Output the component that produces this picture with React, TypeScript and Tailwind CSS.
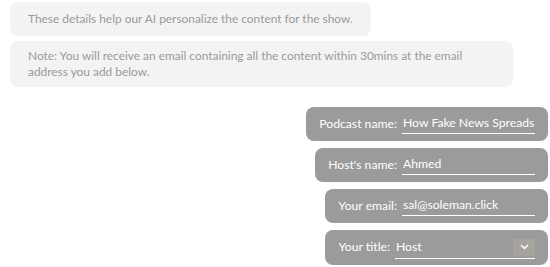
import React from "react";

const font = { fontFamily: '"Lato", "Open Sans", sans-serif' };

function Row({ label, value }: { label: string; value: string }) {
  return (
    <div className="flex h-[34px] items-center whitespace-nowrap rounded-[8px] bg-[#9b9b9b] pl-[13px] pr-[13px]">
      <span className="text-[12.2px] text-white">{label}</span>
      <div className="ml-[5px] flex h-[20px] w-[133px] items-center border-b border-white pl-[1px] text-[12.2px] text-white">
        {value}
      </div>
    </div>
  );
}

export default function App() {
  return (
    <div className="flex w-[550px] flex-col bg-white pt-[2px]" style={font}>
      <div className="flex flex-col items-start gap-[5px] pl-[10px]">
        <div className="rounded-[8px] bg-[#f3f3f3] px-[18px] py-[9px] text-[11.9px] leading-[16px] text-[#9a9a9a]">
          These details help our AI personalize the content for the show.
        </div>
        <div className="w-[503px] rounded-[8px] bg-[#f3f3f3] px-[18px] py-[7px] text-[11.9px] leading-[16px] text-[#9a9a9a]">
          Note: You will receive an email containing all the content within 30mins at the email address you add below.
        </div>
      </div>
      <div className="mt-[20px] flex flex-col items-end gap-[7px] pr-[2px]">
        <Row label="Podcast name:" value="How Fake News Spreads" />
        <Row label="Host's name:" value="Ahmed" />
        <Row label="Your email:" value="sal@soleman.click" />
        <div className="flex h-[35px] items-center whitespace-nowrap rounded-[8px] bg-[#9b9b9b] pl-[13px] pr-[13px]">
          <span className="text-[12.2px] text-white">Your title:</span>
          <div className="ml-[5px] flex h-[22px] w-[140px] items-center justify-between border-b border-white text-[12.2px] text-white">
            <span className="pl-[1px]">Host</span>
            <span className="flex h-[17px] w-[22px] items-center justify-center bg-[#a7a49f]">
              <svg width="9" height="6" viewBox="0 0 9 6" fill="none">
                <path d="M1 1l3.5 3.5L8 1" stroke="white" strokeWidth="1.5" />
              </svg>
            </span>
          </div>
        </div>
      </div>
    </div>
  );
}
